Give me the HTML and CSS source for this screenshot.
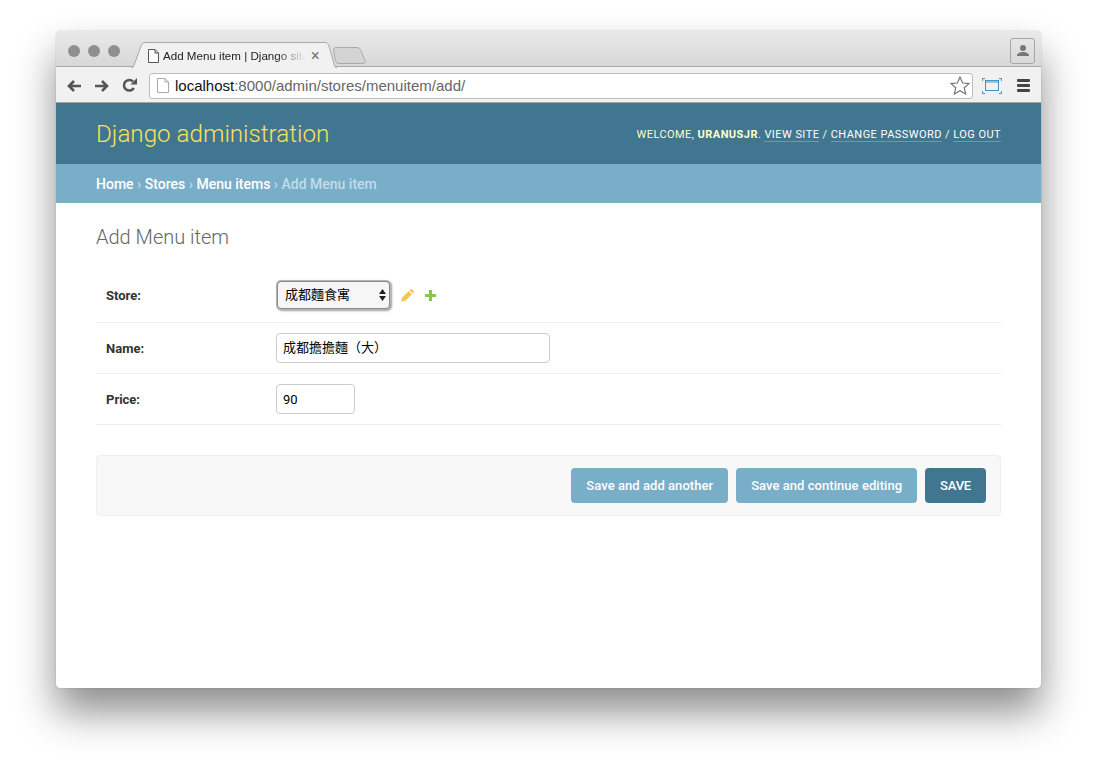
FILE: index.html
```html
<!DOCTYPE html>
<html lang="en">
<head>
  <meta charset="UTF-8" />
  <title>Add Menu item | Django site admin</title>
  <link rel="stylesheet" href="styles.css">
</head>
<body>

<div class="window">
  <div class="tab-strip">
    <div class="lights"><span></span><span></span><span></span></div>
    <div class="tab">
      <svg class="tab-shape" width="206" height="26" viewBox="0 0 206 26">
        <path d="M0 25.500c2 0 3-1 3.500-3.500L10 4c1-2.500 2-3.500 4-3.500h180c2 0 3 1 4 3.500l5 18c.5 2.500 1 3.500 3 3.500" fill="#f1f1f1" stroke="#a9a9a9"/>
      </svg>
      <svg class="page-icon" width="11" height="14" viewBox="0 0 11 14">
        <path d="M.5.5h6.500l3.500 3.500v9.500H.5zM7 .5V4h3.500" fill="#fff" stroke="#555"/>
      </svg>
      <span class="tab-title">Add Menu item | Django site admin</span>
      <span class="tab-close">×</span>
    </div>
    <svg class="new-tab" width="33" height="17" viewBox="0 0 33 17">
      <path d="M3 .5h21c2 0 3 1 4 3l4 10c.5 2-.5 3-2 3H6c-2 0-3-1-3.500-3L.5 3C.5 1.500 1.500.5 3 .5z" fill="#d4d4d4" stroke="#aaa"/>
    </svg>
    <div class="profile">
      <svg width="14" height="14" viewBox="0 0 14 14">
        <circle cx="7" cy="4" r="3" fill="#777"/>
        <path d="M1 12c0-3 3-4 6-4s6 1 6 4z" fill="#777"/>
      </svg>
    </div>
  </div>

  <div class="toolbar">
    <svg class="nav-icon" width="16" height="14" viewBox="0 0 16 14">
      <path d="M15 7H3M8 2 3 7l5 5" fill="none" stroke="#555" stroke-width="2.600"/>
    </svg>
    <svg class="nav-icon" width="16" height="14" viewBox="0 0 16 14">
      <path d="M1 7h12M8 2l5 5-5 5" fill="none" stroke="#555" stroke-width="2.600"/>
    </svg>
    <svg class="nav-icon" width="15" height="15" viewBox="0 0 15 15">
      <path d="M11.800 10A5.300 5.300 0 1 1 11 3.500" fill="none" stroke="#555" stroke-width="2.500"/>
      <path d="M8.500 6.500H15V0z" fill="#555"/>
    </svg>
    <div class="omnibox">
      <svg width="12" height="15" viewBox="0 0 12 15">
        <path d="M.5.500h7.500l3.500 3.500v10.500H.5zM8 .5V4h3.500" fill="#fff" stroke="#aaa"/>
      </svg>
      <span class="url"><b>localhost</b>:8000/admin/stores/menuitem/add/</span>
      <svg class="star" width="20" height="19" viewBox="0 0 20 19">
        <path d="m10 1 2.700 6 6.300.6-4.800 4.200 1.500 6.200L10 14.700 4.300 18l1.500-6.200L1 7.600 7.300 7z" fill="#fff" stroke="#777" stroke-width="1.200"/>
      </svg>
    </div>
    <svg class="cast" width="20" height="16" viewBox="0 0 20 16">
      <path d="M.5 3V.5H3M17 .5h2.500V3M.5 13v2.500H3M17 15.500h2.500V13" fill="none" stroke="#3d93c9"/>
      <rect x="3" y="2" width="14" height="3" fill="#a9bfcd"/>
      <rect x="3.500" y="2.500" width="13" height="10" fill="none" stroke="#3d93c9"/>
    </svg>
    <div class="menu-icon"><span></span><span></span><span></span></div>
  </div>

  <div class="page">
    <div class="header">
      <div class="branding">Django administration</div>
      <div class="user-tools">
        Welcome, <strong>uranusjr</strong>.
        <a href="#">View site</a> /
        <a href="#">Change password</a> /
        <a href="#">Log out</a>
      </div>
    </div>
    <div class="breadcrumbs">
      <a href="#">Home</a> › <a href="#">Stores</a> › <a href="#">Menu items</a> › Add Menu item
    </div>

    <div class="content">
      <h1>Add Menu item</h1>
      <form>
        <div class="form-row form-row-store">
          <label for="store">Store:</label>
          <div class="select-wrap">
            <select id="store"><option>成都麵食寓</option></select>
            <svg class="select-arrows" width="7" height="12" viewBox="0 0 7 12">
              <path d="M3.500 0 7 5H0zM3.500 12 0 7h7z" fill="#222"/>
            </svg>
          </div>
          <svg class="related" width="13" height="13" viewBox="0 0 13 13">
            <path d="M7.800 2 11 5.200 4.500 11.800.3 12.700l.9-4.200z" fill="#f5c84c"/>
            <path d="M8.800 1 9.500.4a1 1 0 0 1 1.300 0l1.800 1.800a1 1 0 0 1 0 1.300l-.6.700z" fill="#f0b92d"/>
          </svg>
          <svg class="related related-add" width="11" height="11" viewBox="0 0 11 11">
            <path d="M4 0h3v4h4v3H7v4H4V7H0V4h4z" fill="#86c64a"/>
          </svg>
        </div>
        <div class="form-row">
          <label for="name">Name:</label>
          <input id="name" class="input-name" type="text" value="成都擔擔麵（大）">
        </div>
        <div class="form-row">
          <label for="price">Price:</label>
          <input id="price" class="input-price" type="text" value="90">
        </div>

        <div class="submit-row">
          <button type="button" class="btn">Save and add another</button>
          <button type="button" class="btn">Save and continue editing</button>
          <button type="button" class="btn btn-default">SAVE</button>
        </div>
      </form>
    </div>
  </div>
</div>

</body>
</html>
```

FILE: styles.css
```css
html, body {
  height: 100%;
}

body {
  margin: 0;
  padding: 31px 56px 0;
  box-sizing: border-box;
  background: #fff;
  overflow: hidden;
  font-family: Roboto, "Noto Sans CJK TC", sans-serif;
}

.window {
  width: 985px;
  height: 657px;
  display: flex;
  flex-direction: column;
  border-radius: 5px 5px 4px 4px;
  box-shadow: 0 24px 40px rgba(0, 0, 0, 0.45), 0 0 1px rgba(0, 0, 0, 0.5);
  overflow: hidden;
  background: #fff;
}

/* browser chrome */
.tab-strip {
  height: 36px;
  flex: none;
  box-sizing: border-box;
  display: flex;
  align-items: flex-end;
  position: relative;
  background: linear-gradient(#e9e9e9, #d8d8d8);
  border-bottom: 1px solid #a9a9a9;
}

.lights {
  display: flex;
  gap: 8px;
  position: absolute;
  left: 12px;
  top: 14px;
}

.lights span {
  width: 12px;
  height: 12px;
  border-radius: 50%;
  background: #8f8e91;
}

.tab {
  width: 206px;
  height: 25px;
  box-sizing: border-box;
  padding-top: 2px;
  margin-left: 75px;
  margin-bottom: -1px;
  position: relative;
  display: flex;
  align-items: center;
  font-size: 11.600px;
  color: #222;
}

.tab-shape {
  position: absolute;
  left: 0;
  top: 0;
}

.page-icon {
  position: relative;
  margin-left: 17px;
  flex: none;
}

.tab-title {
  position: relative;
  margin-left: 4px;
  width: 142px;
  overflow: hidden;
  white-space: nowrap;
  -webkit-mask-image: linear-gradient(90deg, #000 80%, transparent);
  mask-image: linear-gradient(90deg, #000 80%, transparent);
  font-family: "Liberation Sans", sans-serif;
}

.tab-close {
  position: relative;
  margin-left: 6px;
  font-size: 16px;
  color: #777;
}

.new-tab {
  margin-left: -4px;
  margin-bottom: 2px;
}

.profile {
  position: absolute;
  right: 6px;
  top: 7px;
  width: 25px;
  height: 26px;
  box-sizing: border-box;
  border: 1px solid #a5a5a5;
  border-radius: 3px;
  display: flex;
  align-items: center;
  justify-content: center;
}

.toolbar {
  height: 36px;
  flex: none;
  box-sizing: border-box;
  display: flex;
  align-items: center;
  padding: 2px 0 0 10px;
  background: #f1f1f1;
  border-bottom: 1px solid #a5a5a5;
}

.nav-icon {
  margin-right: 12px;
  flex: none;
}

.omnibox {
  width: 824px;
  height: 26px;
  flex: none;
  box-sizing: border-box;
  display: flex;
  align-items: center;
  gap: 6px;
  padding: 0 2px 0 7px;
  background: #fff;
  border: 1px solid #bdbdbd;
  border-radius: 3px;
  font-family: "Liberation Sans", sans-serif;
  font-size: 15px;
  color: #666;
}

.url b {
  font-weight: normal;
  color: #111;
}

.star {
  margin-left: auto;
}

.cast {
  margin-left: 9px;
  flex: none;
}

.menu-icon {
  margin-left: 15px;
  width: 13px;
  flex: none;
  display: flex;
  flex-direction: column;
  gap: 2px;
}

.menu-icon span {
  height: 3px;
  background: #444;
  border-radius: 1px;
}

/* django admin */
.page {
  flex: 1;
  display: flex;
  flex-direction: column;
  color: #333;
}

.header {
  height: 61px;
  flex: none;
  box-sizing: border-box;
  display: flex;
  align-items: center;
  justify-content: space-between;
  padding: 0 40px;
  background: #417690;
}

.branding {
  font-size: 24.200px;
  font-weight: 300;
  color: #f9e25a;
}

.user-tools {
  padding-top: 2px;
  font-size: 11px;
  font-weight: 400;
  letter-spacing: 0.45px;
  text-transform: uppercase;
  color: #ffc;
}

.user-tools strong {
  font-weight: 700;
}

.user-tools a {
  color: #fff;
  text-decoration: none;
  border-bottom: 1px solid rgba(255, 255, 255, 0.25);
}

.breadcrumbs {
  height: 39px;
  flex: none;
  box-sizing: border-box;
  padding: 1px 40px 0;
  line-height: 39px;
  background: #79aec8;
  font-size: 14px;
  font-weight: 500;
  color: #c4dce8;
}

.breadcrumbs a {
  color: #fff;
  text-decoration: none;
}

.content {
  padding: 22px 40px 0;
}

h1 {
  margin: 0 0 21px;
  font-size: 20px;
  line-height: 24px;
  font-weight: 300;
  color: #666;
}

.form-row {
  display: flex;
  align-items: center;
  padding: 10px;
  border-bottom: 1px solid #eee;
}

.form-row-store {
  padding-bottom: 12px;
}

.form-row label {
  width: 170px;
  flex: none;
  font-size: 13px;
  font-weight: 700;
  color: #333;
}

input {
  height: 30px;
  box-sizing: border-box;
  padding: 0 6px;
  border: 1px solid #ccc;
  border-radius: 4px;
  font-family: Roboto, "Noto Sans CJK TC", sans-serif;
  font-size: 13px;
  color: #000;
}

.input-name {
  width: 274px;
  padding-bottom: 3px;
}

.input-price {
  width: 79px;
}

.select-wrap {
  position: relative;
  display: flex;
}

select {
  width: 113px;
  height: 28px;
  margin: 1px;
  padding: 0 7px 3px;
  appearance: none;
  border: 1px solid #8a8a8a;
  border-radius: 4px;
  background: #f6f6f6;
  box-shadow: 0 0 0 1px #b5b5b5, 1px 1px 2px 1px #a0a0a0;
  outline: none;
  font-family: "Noto Sans CJK TC", sans-serif;
  font-size: 13px;
  color: #000;
}

.select-arrows {
  position: absolute;
  right: 5px;
  top: 9px;
}

.related {
  margin-left: 10px;
  flex: none;
}

.related-add {
  margin-left: 11px;
}

.submit-row {
  margin-top: 30px;
  padding: 12px 14px;
  display: flex;
  justify-content: flex-end;
  gap: 8px;
  background: #f8f8f8;
  border: 1px solid #eee;
  border-radius: 4px;
}

.btn {
  height: 35px;
  padding: 0 15px;
  border: 0;
  border-radius: 4px;
  background: #79aec8;
  font-family: Roboto, sans-serif;
  font-size: 13px;
  font-weight: 500;
  letter-spacing: 0.05px;
  color: #fff;
}

.btn-default {
  letter-spacing: -0.2px;
  background: #417690;
}
```
